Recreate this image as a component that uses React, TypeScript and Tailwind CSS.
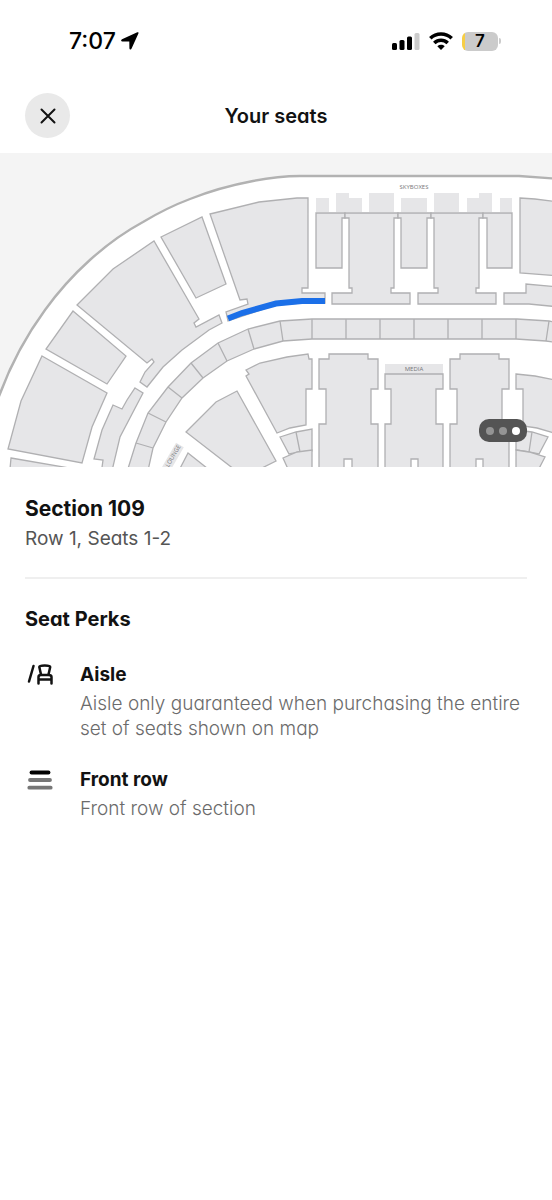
import { ReactNode, useState } from "react";

const sections = [
  // upper bowl corner
  "77,305 113,269 154,241 199,319 194,323 196,327 219,315 222,323 209,330 182,350 163,367 147,387 140,382 145,372 154,362 152,359 147,363",
  "161,237 202,217 226,284 196,298",
  "210,214 259,202 297,198 308,198 308,288 302,288 302,293 325,293 325,303 301,303 276,305 228,321 226,312 248,304 247,299 240,300",
  "73,311 126,356 107,384 46,349",
  "42,356 107,393 92,427 82,463 8,449 21,401",
  "11,458 75,469 75,480 9,480",
  "135,388 143,393 120,437 111,475 101,475 103,460 94,459 102,430 113,405 122,409 127,400",
  // upper sideline
  "316,213 345,213 345,218 342,218 342,268 316,268",
  "345,213 398,213 398,218 394,218 394,288 391,288 391,293 410,293 410,304 332,304 332,293 352,293 352,288 349,288 349,218 345,218",
  "398,213 431,213 431,218 427,218 427,268 401,268 401,218 398,218",
  "431,213 483,213 483,218 479,218 479,288 476,288 476,293 496,293 496,304 418,304 418,293 438,293 438,288 434,288 434,218 431,218",
  "483,213 512,213 512,268 487,268 487,218 483,218",
  "520,198 535,199 560,202 560,276 520,273",
  "504,293 526,293 526,284 560,287 560,307 529,304 504,304",
  // suite ring
  "126,475 136,443 148,413 168,387 191,363 218,343 248,329 280,321 312,319 517,319 549,321 560,323 560,343 546,341 516,339 312,339 283,341 254,349 227,361 203,378 182,398 166,422 153,448 147,475",
  // lower bowl
  "246,370 260,363 287,357 308,354 309,359 312,359 312,389 306,389 306,425 290,428 277,433 246,376 249,374",
  "237,391 276,461 262,468 262,480 248,480 186,432 216,402",
  "188,453 222,480 174,480",
  "280,437 296,432 312,429 312,451 300,452 289,454",
  "283,458 297,452 312,450 312,480 293,480",
  "329,354 368,354 368,359 378,359 378,389 371,389 371,424 378,424 378,480 352,480 352,459 344,459 344,480 319,480 319,424 326,424 326,389 319,389 319,359 329,359",
  "385,374 443,374 443,389 436,389 436,424 443,424 443,480 418,480 418,459 411,459 411,480 385,480 385,424 391,424 391,389 385,389",
  "450,359 460,359 460,354 499,354 499,359 509,359 509,389 502,389 502,424 509,424 509,480 483,480 483,459 476,459 476,480 450,480 450,424 457,424 457,389 450,389",
  "516,374 535,376 560,381 560,436 551,432 537,428 523,426 523,389 516,389",
  "516,430 532,432 548,437 539,454 529,452 516,450",
  "516,450 529,452 545,457 533,480 516,480",
];

const dividers =
  "M136 443 153 448M148 413 166 422M168 387 182 398M191 363 203 378M218 343 227 361M248 329 254 349M280 321 283 341M312 319V339M346 319V339M380 319V339M414 319V339M448 319V339M482 319V339M516 319V339M549 321 546 341M296 432 300 452M532 432 529 452";

const skyboxes =
  "M316 198h13v14h-13zM336 193h13v5h13v14h-26zM369 193h25v19h-25zM401 198h26v14h-26zM434 193h25v19h-25zM467 198h12v-5h13v19h-25zM500 198h12v14h-12zM385 364h58v10h-58z";

const outline =
  "M-3 402C8 370 23 340 45 310C71 274 106 242 143 222C158 213 174 205 190 199C210 191 232 185 253 181C268 178 283 176 300 176H519L560 179";

const SeatMap = () => (
  <svg viewBox="0 153 552 314" className="block h-auto w-full bg-[#f4f4f4]" role="img" aria-label="Seat map, section 109">
    <path d={`${outline}V480H-3Z`} fill="#fff" />
    <path d={outline} fill="none" stroke="#b2b2b2" strokeWidth="2.400" />
    <path d={skyboxes} fill="#e6e6e8" />
    <g fill="#e6e6e8" stroke="#b0b0b2" strokeWidth="1.300">
      {sections.map((points) => (
        <polygon key={points} points={points} />
      ))}
      <path d={dividers} />
    </g>
    <path d="M228 318.500 242 313 276 303.500 302 301H325" fill="none" stroke="#1b6fe8" strokeWidth="6" />
    <g fill="#77777a" textAnchor="middle" className="font-['Open_Sans',sans-serif] text-[6px]">
      <text x="414" y="189">SKYBOXES</text>
      <text x="414" y="371">MEDIA</text>
      <g transform="translate(173 456) rotate(-60)">
        <rect x="-17" y="-4" width="30" height="9" fill="#e6e6e8" />
        <text y="2">LOUNGE</text>
      </g>
    </g>
  </svg>
);

const StatusBar = () => (
  <div className="flex h-[78px] items-center justify-between pl-[69px] pr-[51px] pt-1 text-black">
    <div className="flex items-center gap-1">
      <span className="text-[23px] font-medium leading-7">7:07</span>
      <svg width="20" height="20" viewBox="0 0 20 20" aria-hidden="true">
        <path d="M17.300 1.300 2 8.200C.6 8.900.9 10.400 2.400 10.400L9.300 10.500 9.400 17.200C9.500 18.800 11 19 11.600 17.600L18.400 2.500C18.800 1.500 18.200.9 17.300 1.300Z" />
      </svg>
    </div>
    <div className="flex items-center gap-[9px]">
      <svg width="28" height="18" viewBox="0 0 28 18" aria-hidden="true">
        <rect x="0" y="11" width="5" height="7" rx="1.500" />
        <rect x="7.500" y="8" width="5" height="10" rx="1.500" />
        <rect x="15" y="4.500" width="5" height="13.500" rx="1.500" />
        <rect x="22.500" y="1" width="5" height="17" rx="1.500" fill="#ccc" />
      </svg>
      <svg width="24" height="18" viewBox="0 0 24 18" aria-hidden="true">
        <g fill="none" stroke="#000" strokeWidth="3.600">
          <path d="M1.300 6.300C7.300.6 16.700.6 22.700 6.300" />
          <path d="M5.300 11C9.200 7.300 14.800 7.300 18.700 11" />
        </g>
        <path d="M8.300 14.200C10.500 12.300 13.500 12.300 15.700 14.200L12 17.900Z" />
      </svg>
      <div className="flex items-center gap-px">
        <div className="flex h-[19px] w-9 items-center justify-center rounded-md bg-gradient-to-r from-[#f7ce45] from-8% to-[#cbcbcb] to-8% text-[17px] font-semibold leading-none">
          7
        </div>
        <div className="h-1.5 w-0.5 rounded-r-full bg-[#cbcbcb]" />
      </div>
    </div>
  </div>
);

const AisleIcon = () => (
  <svg width="30" height="28" viewBox="0 0 30 28" fill="none" stroke="#121212" strokeWidth="2.500" strokeLinecap="round" strokeLinejoin="round" aria-hidden="true">
    <path d="M8.500 5 4 20.500" />
    <path d="M16 13.500 14.300 6C14.300 4 25.200 4 25.200 6L23.500 13.500" />
    <path d="M13.500 22.500V16Q13.500 14 16 14H23.500Q26.500 14 26.500 16V22.500M13.500 18.600H26.500" />
  </svg>
);

const FrontRowIcon = () => (
  <svg width="30" height="28" viewBox="0 0 30 28" fill="none" strokeWidth="3.800" strokeLinecap="round" aria-hidden="true">
    <path d="M6.500 6.500H23.500" stroke="#000" />
    <path d="M5 14H25M4.300 21.700H25.700" stroke="#777" />
  </svg>
);

const Perk = ({ icon, title, children }: { icon: ReactNode; title: string; children: ReactNode }) => (
  <li className="flex gap-[25px]">
    <div className="w-[30px] shrink-0">{icon}</div>
    <div>
      <h3 className="text-[19px] font-bold leading-7">{title}</h3>
      <p className="mt-0.5 text-[19px] font-light leading-[25px] text-[#6b6b6b]">{children}</p>
    </div>
  </li>
);

const App = () => {
  const [page, setPage] = useState(2);

  return (
    <div className="min-h-screen bg-white font-[Inter,'Liberation_Sans',sans-serif] text-[#121212] [font-feature-settings:'cv11']">
      <StatusBar />
      <header className="grid h-[75px] grid-cols-[45px_1fr_45px] items-center px-[25px]">
        <button type="button" aria-label="Close" className="flex size-[45px] items-center justify-center rounded-full bg-[#e9e9e9]">
          <svg width="16" height="16" viewBox="0 0 16 16" stroke="#121212" strokeWidth="2" strokeLinecap="round" aria-hidden="true">
            <path d="M1.500 1.500 14.500 14.500M14.500 1.500 1.500 14.500" />
          </svg>
        </button>
        <h1 className="text-center text-xl font-semibold leading-7">Your seats</h1>
      </header>

      <div className="relative">
        <SeatMap />
        <div className="absolute bottom-[25px] right-[25px] flex h-[23px] w-12 items-center justify-center gap-[5px] rounded-[10px] bg-[#545454]">
          {[0, 1, 2].map((i) => (
            <button
              key={i}
              type="button"
              aria-label={`View ${i + 1}`}
              onClick={() => setPage(i)}
              className={`size-2 rounded-full ${i === page ? "bg-white" : "bg-[#949494]"}`}
            />
          ))}
        </div>
      </div>

      <main className="px-[25px] pt-7">
        <h2 className="text-[21px] font-bold leading-7">Section 109</h2>
        <p className="mt-0.5 text-[19px] leading-7 text-[#555]">Row 1, Seats 1-2</p>
        <hr className="mt-6 border-t-2 border-[#efefef]" />
        <h2 className="mt-[26px] text-xl font-bold leading-7">Seat Perks</h2>
        <ul className="mt-7 flex flex-col gap-[25px]">
          <Perk icon={<AisleIcon />} title="Aisle">
            Aisle only guaranteed when purchasing the entire set of seats shown on map
          </Perk>
          <Perk icon={<FrontRowIcon />} title="Front row">
            Front row of section
          </Perk>
        </ul>
      </main>
    </div>
  );
};

export default App;
